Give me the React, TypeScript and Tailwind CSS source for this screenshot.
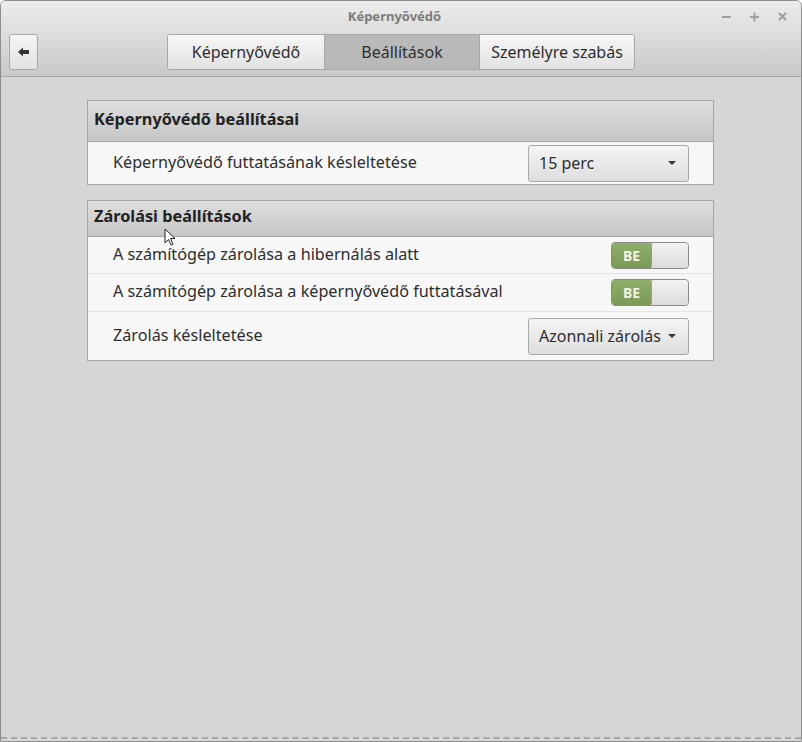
const font = { fontFamily: '"Noto Sans", "DejaVu Sans", sans-serif' };

const Caret = () => (
  <svg width="10" height="6" viewBox="0 0 10 6" className="ml-auto shrink-0">
    <path d="M1 1 L9 1 L5 5 Z" fill="#333" />
  </svg>
);

const Toggle = () => (
  <div className="flex h-[27px] w-[78px] overflow-hidden rounded-[4px] border border-[#8a8a8a]">
    <div className="flex w-[39px] items-center justify-center bg-[linear-gradient(#8fae6a,#7a9a55)] text-[14px] font-bold text-[#f2f2e8]">
      BE
    </div>
    <div className="flex-1 rounded-[3px] border-l border-[#9a9a9a] bg-[linear-gradient(#f2f2f2,#dcdcdc)]" />
  </div>
);

const Dropdown = ({ label }: { label: string }) => (
  <div className="flex h-[37px] w-[161px] items-center rounded-[3px] border border-[#a8a8a8] bg-[linear-gradient(#f4f4f4,#dedede)] pl-[10px] pr-[11px] text-[16px] text-[#2e2e2e]">
    <span className="whitespace-nowrap">{label}</span>
    <Caret />
  </div>
);

const Row = ({ label, children, last, h }: { label: string; children: React.ReactNode; last?: boolean; h: string }) => (
  <div className={`flex ${h} items-center bg-[#f7f7f7] pl-[25px] pr-[24px] ${last ? "" : "border-b border-[#e4e4e4]"}`}>
    <span className="pb-[2px] text-[16.2px] text-[#2e2e2e]">{label}</span>
    <div className="ml-auto">{children}</div>
  </div>
);

const FrameHeader = ({ title, h }: { title: string; h: string }) => (
  <div className={`flex ${h} items-center border-b border-[#a6a6a6] bg-[linear-gradient(#dedede,#c6c6c6)] px-[6px] pb-[4px] text-[16.3px] font-bold text-[#222]`}>
    {title}
  </div>
);

export default function App() {
  return (
    <div style={font} className="relative flex h-[742px] w-[802px] flex-col overflow-hidden rounded-t-[6px] border border-[#8e8e8e] bg-[#d6d6d6]">
      <div className="flex h-[76px] flex-col border-b border-[#a9a9a9] bg-[linear-gradient(#ececec,#c9c9c9)]">
        <div className="relative flex h-[32px] items-center justify-center pr-[13px]">
          <span className="text-[13px] font-bold text-[#7b7b7b]">Képernyővédő</span>
          <div className="absolute right-[13px] top-[10px] flex items-center gap-[17px]">
            <svg width="11" height="11" viewBox="0 0 11 11"><rect x="1" y="5" width="9" height="2" fill="#a0a0a0" /></svg>
            <svg width="11" height="11" viewBox="0 0 11 11"><rect x="1" y="5" width="9" height="2" fill="#a0a0a0" /><rect x="4.5" y="1.5" width="2" height="9" fill="#a0a0a0" /></svg>
            <svg width="11" height="11" viewBox="0 0 11 11"><path d="M2 2 L9 9 M9 2 L2 9" stroke="#a0a0a0" strokeWidth="2.2" /></svg>
          </div>
        </div>
        <div className="flex items-start pl-[8px] pt-[1px]">
          <div className="flex h-[36px] w-[29px] items-center justify-center rounded-[3px] border border-[#a8a8a8] bg-[linear-gradient(#f5f5f5,#e2e2e2)]">
            <svg width="12" height="10" viewBox="0 0 12 10"><path d="M0 5 L5 0.5 L5 3 L11 3 L11 7 L5 7 L5 9.5 Z" fill="#333" /></svg>
          </div>
          <div className="ml-[129px] flex h-[36px] overflow-hidden rounded-[3px] border border-[#a8a8a8] text-[16px] text-[#2e2e2e]">
            <div className="flex w-[156px] items-center justify-center bg-[linear-gradient(#f6f6f6,#e2e2e2)]">Képernyővédő</div>
            <div className="flex w-[156px] items-center justify-center border-x border-[#a8a8a8] bg-[#b9b9b9]">Beállítások</div>
            <div className="flex w-[154px] items-center justify-center bg-[linear-gradient(#f6f6f6,#e2e2e2)]">Személyre szabás</div>
          </div>
        </div>
      </div>

      <div className="flex flex-col gap-[15px] pl-[86px] pt-[23px]">
        <div className="w-[627px] border border-[#a6a6a6]">
          <FrameHeader title="Képernyővédő beállításai" h="h-[41px]" />
          <Row label="Képernyővédő futtatásának késleltetése" h="h-[42px]" last>
            <Dropdown label="15 perc" />
          </Row>
        </div>
        <div className="w-[627px] border border-[#a6a6a6]">
          <FrameHeader title="Zárolási beállítások" h="h-[36px]" />
          <Row label="A számítógép zárolása a hibernálás alatt" h="h-[37px]">
            <Toggle />
          </Row>
          <Row label="A számítógép zárolása a képernyővédő futtatásával" h="h-[38px]">
            <Toggle />
          </Row>
          <Row label="Zárolás késleltetése" h="h-[48px]" last>
            <Dropdown label="Azonnali zárolás" />
          </Row>
        </div>
      </div>

      <svg width="14" height="20" viewBox="0 0 14 20" className="absolute left-[163px] top-[227px]">
        <path d="M1 1 L1 15 L4.5 11.5 L7 17 L9 16 L6.5 10.5 L11 10.5 Z" fill="#fff" stroke="#222" strokeWidth="1" />
      </svg>

      <div className="absolute bottom-[2px] left-0 right-0 border-b-2 border-dashed border-[#a9a9a9]" />
    </div>
  );
}
